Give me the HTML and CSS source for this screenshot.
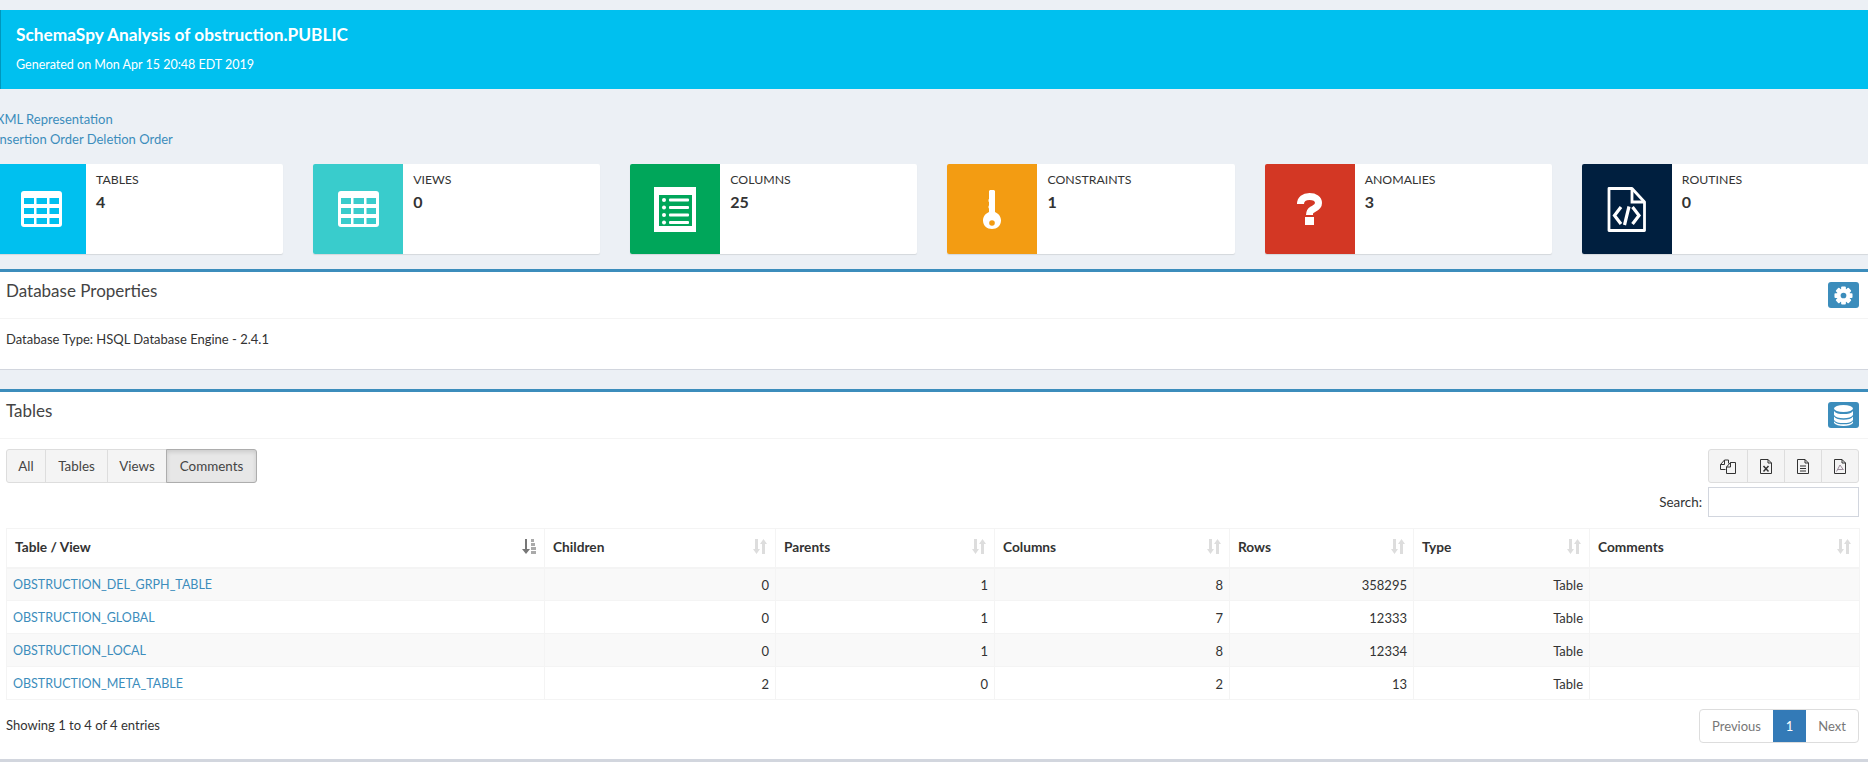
FILE: index.html
```html
<!DOCTYPE html>
<html lang="en">
<head>
<meta charset="utf-8">
<title>SchemaSpy Analysis of obstruction.PUBLIC</title>
<link rel="stylesheet" href="styles.css">
</head>
<body>
<header class="callout">
  <h4 class="callout-title">SchemaSpy Analysis of obstruction.PUBLIC</h4>
  <p class="callout-sub">Generated on Mon Apr 15 20:48 EDT 2019</p>
</header>

<div class="links">
  <div><a href="#">XML Representation</a></div>
  <div><a href="#">Insertion Order</a> <a href="#">Deletion Order</a></div>
</div>

<section class="cards">
  <div class="card">
    <div class="card-icon bg-blue">
      <svg class="ico-table" viewBox="0 0 41 36"><rect width="41" height="36" rx="3" fill="#fff"/><g fill="#00c0ef"><rect x="3" y="7" width="10" height="6"/><rect x="15.500" y="7" width="10.500" height="6"/><rect x="28.500" y="7" width="9.500" height="6"/><rect x="3" y="17" width="10" height="6"/><rect x="15.500" y="17" width="10.500" height="6"/><rect x="28.500" y="17" width="9.500" height="6"/><rect x="3" y="27" width="10" height="6"/><rect x="15.500" y="27" width="10.500" height="6"/><rect x="28.500" y="27" width="9.500" height="6"/></g></svg>
    </div>
    <div class="card-body"><span class="card-label">Tables</span><span class="card-num">4</span></div>
  </div>
  <div class="card">
    <div class="card-icon bg-teal">
      <svg class="ico-table" viewBox="0 0 41 36"><rect width="41" height="36" rx="3" fill="#fff"/><g fill="#39cccc"><rect x="3" y="7" width="10" height="6"/><rect x="15.500" y="7" width="10.500" height="6"/><rect x="28.500" y="7" width="9.500" height="6"/><rect x="3" y="17" width="10" height="6"/><rect x="15.500" y="17" width="10.500" height="6"/><rect x="28.500" y="17" width="9.500" height="6"/><rect x="3" y="27" width="10" height="6"/><rect x="15.500" y="27" width="10.500" height="6"/><rect x="28.500" y="27" width="9.500" height="6"/></g></svg>
    </div>
    <div class="card-body"><span class="card-label">Views</span><span class="card-num">0</span></div>
  </div>
  <div class="card">
    <div class="card-icon bg-green">
      <svg class="ico-list" viewBox="0 0 42 45"><rect width="42" height="45" fill="#fff"/><rect x="5" y="8" width="33" height="31" fill="#00a65a"/><g fill="#fff"><circle cx="10" cy="13" r="2"/><circle cx="10" cy="20.500" r="2"/><circle cx="10" cy="28" r="2"/><circle cx="10" cy="35.500" r="2"/><rect x="15" y="11.500" width="20" height="3" rx="1"/><rect x="15" y="19" width="20" height="3" rx="1"/><rect x="15" y="26.500" width="20" height="3" rx="1"/><rect x="15" y="34" width="20" height="3" rx="1"/></g></svg>
    </div>
    <div class="card-body"><span class="card-label">Columns</span><span class="card-num">25</span></div>
  </div>
  <div class="card">
    <div class="card-icon bg-orange">
      <svg class="ico-key" viewBox="0 0 18 39"><path fill="#fff" d="M6 1L7 0H11L12 1V22C15.500 23.500 18 26.500 18 30.500C18 35.500 14 39 9 39C4 39 0 35.500 0 30.500C0 26.500 2.500 23.500 6 22V18.500L5.500 18V16L6 15.500V12L5.500 11.500V9.500L6 9Z"/><circle cx="9" cy="33" r="2.800" fill="#f39c12"/></svg>
    </div>
    <div class="card-body"><span class="card-label">Constraints</span><span class="card-num">1</span></div>
  </div>
  <div class="card">
    <div class="card-icon bg-red">
      <svg class="ico-question" viewBox="0 0 25 32"><path fill="none" stroke="#fff" stroke-width="7" d="M3.500 11C3.500 6 7 3.500 12.500 3.500C18 3.500 21.500 6 21.500 10C21.500 14 18 15 15.500 16.500C13.500 17.700 12.500 18.500 12.500 22"/><rect x="8" y="24" width="9" height="8" fill="#fff"/></svg>
    </div>
    <div class="card-body"><span class="card-label">Anomalies</span><span class="card-num">3</span></div>
  </div>
  <div class="card">
    <div class="card-icon bg-navy">
      <svg class="ico-file" viewBox="0 0 39 45"><path fill="none" stroke="#fff" stroke-width="2.800" stroke-linejoin="round" d="M2 1.500H25L37.500 15V43.500H2Z"/><path fill="none" stroke="#fff" stroke-width="2.800" d="M25 1.500V15H37.500"/><path fill="none" stroke="#fff" stroke-width="3.200" d="M14 20L7.500 28.500L14 37M25.500 20L32 28.500L25.500 37M22 19.500L17.500 38"/></svg>
    </div>
    <div class="card-body"><span class="card-label">Routines</span><span class="card-num">0</span></div>
  </div>
</section>

<section class="panel panel-props">
  <div class="panel-head">
    <h3 class="panel-title">Database Properties</h3>
    <span class="tool-btn">
      <svg class="ico-gear" viewBox="0 0 20 20"><g fill="#fff"><rect x="7.500" y="0.500" width="5" height="19" rx="1"/><rect x="7.500" y="0.500" width="5" height="19" rx="1" transform="rotate(45 10 10)"/><rect x="7.500" y="0.500" width="5" height="19" rx="1" transform="rotate(90 10 10)"/><rect x="7.500" y="0.500" width="5" height="19" rx="1" transform="rotate(135 10 10)"/><circle cx="10" cy="10" r="7"/></g><circle cx="10" cy="10" r="3" fill="#3c8dbc"/></svg>
    </span>
  </div>
  <div class="panel-body props-body">Database Type: HSQL Database Engine - 2.4.1</div>
</section>

<section class="panel panel-tables">
  <div class="panel-head">
    <h3 class="panel-title">Tables</h3>
    <span class="tool-btn">
      <svg class="ico-db" viewBox="0 0 19 21"><g fill="#fff"><ellipse cx="9.500" cy="3.500" rx="9.500" ry="3.500"/><path d="M0 6C1.500 8.500 5 9 9.500 9S17.500 8.500 19 6V10C17.500 12.500 14 13.200 9.500 13.200S1.500 12.500 0 10Z"/><path d="M0 11.500C1.500 14 5 14.700 9.500 14.700S17.500 14 19 11.500V15C17.500 17.500 14 18 9.500 18S1.500 17.500 0 15Z"/><path d="M0 16.200C1.500 18.700 5 19.200 9.500 19.200S17.500 18.700 19 16.200V18C17.500 20 14 21 9.500 21S1.500 20 0 18Z"/></g></svg>
    </span>
  </div>
  <div class="panel-body tables-body">
    <div class="controls">
      <div class="btn-group">
        <button class="btn btn-all">All</button>
        <button class="btn btn-tables">Tables</button>
        <button class="btn btn-views">Views</button>
        <button class="btn btn-comments is-active">Comments</button>
      </div>
      <div class="controls-right">
        <div class="btn-group">
          <button class="btn btn-export btn-e1"><svg class="ico-exp ico-copy" viewBox="0 0 16 15"><path d="M5.500 10.500H.5V5.500L4.500 1H8.500V4.500M4.500 1V5.500H.5"/><path d="M6.500 14.500V8L10.500 3.500H15.500V14.500Z"/><path d="M10.500 3.500V8H6.500"/></svg></button>
          <button class="btn btn-export btn-e2"><svg class="ico-exp" viewBox="0 0 12 15"><path d="M.5.5H8L11.500 4V14.500H.5Z"/><path d="M8 .5V4H11.500"/><path d="M3.500 7L8.500 12.500M8.500 7L3.500 12.500" stroke-width="1.500"/></svg></button>
          <button class="btn btn-export btn-e3"><svg class="ico-exp" viewBox="0 0 12 15"><path d="M.5.5H8L11.500 4V14.500H.5Z"/><path d="M8 .5V4H11.500M3 7H9M3 9.500H9M3 12H9"/></svg></button>
          <button class="btn btn-export btn-e4"><svg class="ico-exp" viewBox="0 0 12 15"><path d="M.5.5H8L11.500 4V14.500H.5Z"/><path d="M8 .5V4H11.500"/><path d="M2.500 12.500L6 6L9.500 11M3.500 10.500H9" stroke="#9a8a9a"/></svg></button>
        </div>
        <label class="search">Search: <input class="search-input" type="text"></label>
      </div>
    </div>

    <table class="data">
      <colgroup>
        <col class="c1"><col class="c2"><col class="c3"><col class="c4"><col class="c5"><col class="c6"><col class="c7">
      </colgroup>
      <thead>
        <tr>
          <th><div class="th"><span>Table / View</span><svg class="ico-sort" viewBox="0 0 14 15"><path fill="#777" d="M3 0H5V10H8L4 15L0 10H3Z"/><path fill="#aaa" d="M9 0H12V3H9ZM9 4H13V7H9ZM9 8H14V11H9ZM9 12H14V15H9Z"/></svg></div></th>
          <th><div class="th"><span>Children</span><svg class="ico-sort" viewBox="0 0 14 15"><path fill="#ddd" d="M2 0H5V10H7L3.500 15L0 10H2ZM9 15H12V5H14L10.500 0L7 5H9Z"/></svg></div></th>
          <th><div class="th"><span>Parents</span><svg class="ico-sort" viewBox="0 0 14 15"><path fill="#ddd" d="M2 0H5V10H7L3.500 15L0 10H2ZM9 15H12V5H14L10.500 0L7 5H9Z"/></svg></div></th>
          <th><div class="th"><span>Columns</span><svg class="ico-sort" viewBox="0 0 14 15"><path fill="#ddd" d="M2 0H5V10H7L3.500 15L0 10H2ZM9 15H12V5H14L10.500 0L7 5H9Z"/></svg></div></th>
          <th><div class="th"><span>Rows</span><svg class="ico-sort" viewBox="0 0 14 15"><path fill="#ddd" d="M2 0H5V10H7L3.500 15L0 10H2ZM9 15H12V5H14L10.500 0L7 5H9Z"/></svg></div></th>
          <th><div class="th"><span>Type</span><svg class="ico-sort" viewBox="0 0 14 15"><path fill="#ddd" d="M2 0H5V10H7L3.500 15L0 10H2ZM9 15H12V5H14L10.500 0L7 5H9Z"/></svg></div></th>
          <th><div class="th"><span>Comments</span><svg class="ico-sort" viewBox="0 0 14 15"><path fill="#ddd" d="M2 0H5V10H7L3.500 15L0 10H2ZM9 15H12V5H14L10.500 0L7 5H9Z"/></svg></div></th>
        </tr>
      </thead>
      <tbody>
        <tr><td class="name"><a href="#">OBSTRUCTION_DEL_GRPH_TABLE</a></td><td>0</td><td>1</td><td>8</td><td>358295</td><td>Table</td><td></td></tr>
        <tr><td class="name"><a href="#">OBSTRUCTION_GLOBAL</a></td><td>0</td><td>1</td><td>7</td><td>12333</td><td>Table</td><td></td></tr>
        <tr><td class="name"><a href="#">OBSTRUCTION_LOCAL</a></td><td>0</td><td>1</td><td>8</td><td>12334</td><td>Table</td><td></td></tr>
        <tr><td class="name"><a href="#">OBSTRUCTION_META_TABLE</a></td><td>2</td><td>0</td><td>2</td><td>13</td><td>Table</td><td></td></tr>
      </tbody>
    </table>

    <div class="table-foot">
      <div class="info">Showing 1 to 4 of 4 entries</div>
      <div class="pager">
        <span class="page page-prev">Previous</span>
        <span class="page page-cur">1</span>
        <span class="page page-next">Next</span>
      </div>
    </div>
  </div>
</section>
</body>
</html>
```

FILE: styles.css
```css
* { box-sizing: border-box; }
html, body { height: 100%; }
body {
  margin: 0;
  padding-top: 10px;
  background: #ecf0f5;
  color: #333;
  font-family: "Lato", "Liberation Sans", sans-serif;
  font-size: 13px;
  line-height: 20px;
  overflow: hidden;
}
a { color: #3c8dbc; text-decoration: none; }

.callout {
  height: 79px;
  padding: 15px 15px;
  background: #00c0ef;
  border-left: 1px solid #0097bc;
  color: #fff;
}
.callout-title { margin: 0; font-size: 17.300px; line-height: 20px; font-weight: 700; }
.callout-sub { margin: 10px 0 0; font-size: 12.500px; line-height: 20px; }

.links { margin: 20px 0 0 -4px; }
.links div + div { margin-top: 0; }

.cards {
  display: grid;
  grid-template-columns: repeat(6, 1fr);
  column-gap: 30px;
  width: 1873px;
  margin: 15px 0 0 -4px;
}
.card {
  display: flex;
  height: 90px;
  background: #fff;
  border-radius: 2px;
  box-shadow: 0 1px 1px rgba(0,0,0,.1);
  overflow: hidden;
}
.card-icon {
  flex: 0 0 90px;
  display: flex;
  align-items: center;
  justify-content: center;
}
.bg-blue { background: #00c0ef; }
.bg-teal { background: #39cccc; }
.bg-green { background: #00a65a; }
.bg-orange { background: #f39c12; }
.bg-red { background: #d33724; }
.bg-navy { background: #001f3f; }
.card-body { padding: 6px 10px; display: flex; flex-direction: column; }
.card-label { text-transform: uppercase; font-size: 12.300px; line-height: 20px; }
.card-num { font-weight: 700; font-size: 16px; line-height: 20px; margin-top: 2px; }

.ico-table { width: 41px; height: 36px; }
.ico-list { width: 42px; height: 45px; }
.ico-key { width: 18px; height: 39px; }
.ico-question { width: 25px; height: 32px; }
.ico-file { width: 39px; height: 45px; }
.ico-gear { width: 19px; height: 19px; }
.ico-db { width: 19px; height: 21px; }

.panel {
  background: #fff;
  border-top: 3px solid #3c8dbc;
  border-bottom: 1px solid #d2d6de;
}
.panel-props { margin-top: 15px; height: 101px; }
.panel-tables { margin-top: 19px; height: 373px; border-bottom-width: 3px; }
.panel-head {
  height: 47px;
  padding: 10px 9px 0 6px;
  display: flex;
  justify-content: space-between;
  align-items: flex-start;
  border-bottom: 1px solid #f4f4f4;
}
.panel-title { margin: -1px 0 0; font-size: 17px; font-weight: 400; line-height: 20px; color: #444; }
.tool-btn {
  width: 31px;
  height: 26px;
  background: #3c8dbc;
  border-radius: 3px;
  display: flex;
  align-items: center;
  justify-content: center;
}
.props-body { padding: 10px 6px; }
.tables-body { padding: 10px 9px 0 6px; }

.controls { display: flex; justify-content: space-between; align-items: flex-start; height: 68px; }
.controls-right { display: flex; flex-direction: column; align-items: flex-end; gap: 4px; }
.btn-group { display: flex; }
.btn {
  height: 34px;
  padding: 0;
  background: #f4f4f4;
  border: 1px solid #ddd;
  margin-left: -1px;
  color: #444;
  font: inherit;
  font-size: 13.400px;
  display: flex;
  align-items: center;
  justify-content: center;
}
.btn:first-child { margin-left: 0; border-radius: 3px 0 0 3px; }
.btn:last-child { border-radius: 0 3px 3px 0; }
.btn-all { width: 40px; }
.btn-tables { width: 63px; }
.btn-views { width: 60px; }
.btn-comments { width: 91px; }
.is-active { background: #e7e7e7; border-color: #adadad; box-shadow: inset 0 2px 4px rgba(0,0,0,.125); }
.btn-export { width: 38px; }
.btn-e1 { width: 40px; }
.ico-exp { width: 14px; height: 15px; fill: none; stroke: #333; stroke-width: 1; }
.ico-copy { width: 16px; }

.search { display: flex; align-items: center; gap: 6px; font-size: 13.400px; }
.search-input { width: 151px; height: 30px; border: 1px solid #d2d6de; background: #fff; padding: 0; }

.data { margin-top: 11px; width: 1853px; table-layout: fixed; border-collapse: collapse; font-size: 13px; }
.c1 { width: 538px; }
.c2 { width: 231px; }
.c3 { width: 219px; }
.c4 { width: 235px; }
.c5 { width: 184px; }
.c6 { width: 176px; }
.c7 { width: 270px; }
.data th, .data td { border: 1px solid #f4f4f4; }
.data th { height: 39px; padding: 0 8px 2px 8px; border-bottom-width: 2px; text-align: left; font-weight: 700; font-size: 13.700px; }
.th { display: flex; justify-content: space-between; align-items: center; }
.ico-sort { width: 14px; height: 15px; }
.data td { height: 33px; padding: 1px 6px 0; text-align: right; color: #333; }
.data td.name { text-align: left; font-size: 12.500px; }
.data tbody tr:nth-child(odd) { background: #f9f9f9; }

.table-foot { margin-top: 9px; display: flex; justify-content: space-between; align-items: center; }
.info { margin-top: -2px; }
.pager { display: flex; height: 34px; border: 1px solid #ddd; border-radius: 4px; }
.page { display: flex; align-items: center; justify-content: center; color: #777; }
.page-prev { width: 73px; }
.page-cur { width: 33px; background: #337ab7; color: #fff; }
.page-next { width: 52px; }
```
